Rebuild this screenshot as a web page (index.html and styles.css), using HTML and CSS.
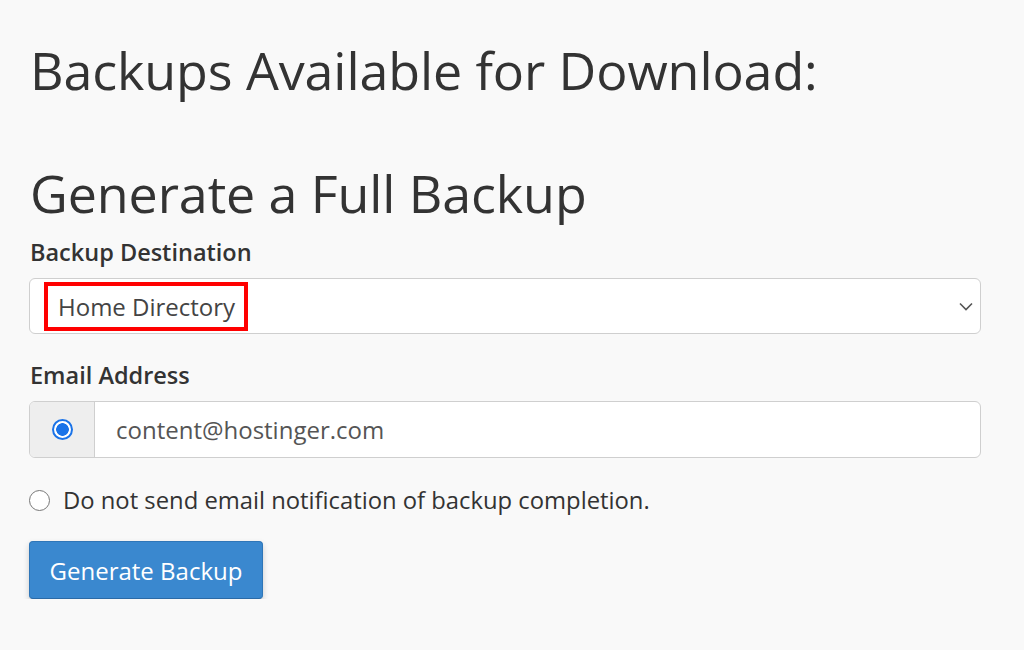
FILE: index.html
```html
<!DOCTYPE html>
<html>
<head>
<meta charset="utf-8">
<link rel="stylesheet" href="styles.css">
</head>
<body>
<div class="page">
  <h1 class="title">Backups Available for Download:</h1>
  <h2 class="title second">Generate a Full Backup</h2>
  <form class="form">
    <label class="label">Backup Destination</label>
    <div class="select">
      <span class="select-value">Home Directory<span class="highlight"></span></span>
      <svg class="chevron" width="14" height="9" viewBox="0 0 14 9"><path d="M1 1.5 L7 7.5 L13 1.5" fill="none" stroke="#555" stroke-width="1.6"/></svg>
    </div>
    <label class="label email-label">Email Address</label>
    <div class="input-group">
      <div class="addon"><span class="radio checked"></span></div>
      <div class="input">content@hostinger.com</div>
    </div>
    <div class="radio-row"><span class="radio"></span><span class="radio-text">Do not send email notification of backup completion.</span></div>
    <button type="button" class="btn">Generate Backup</button>
  </form>
</div>
</body>
</html>
```

FILE: styles.css
```css
html, body {
  margin: 0;
  padding: 0;
  background: #f9f9f9;
}
body {
  font-family: "Open Sans", "Noto Sans", sans-serif;
  color: #333;
}
.page {
  padding: 40px 43px 0 29px;
}
.title {
  font-size: 52px;
  font-weight: 400;
  line-height: 60px;
  margin: 0 0 0 1px;
  letter-spacing: -0.1px;
}
.second {
  margin-top: 63px;
}
.form {
  display: flex;
  flex-direction: column;
  align-items: flex-start;
}
.label {
  font-size: 23.5px;
  font-weight: 600;
  line-height: 30px;
  margin: 14px 0 11px 1px;
}
.email-label {
  margin-top: 26px;
}
.select {
  box-sizing: border-box;
  width: 952px;
  height: 56px;
  background: #fff;
  border: 1px solid #cfcfcf;
  border-radius: 6px;
  display: flex;
  align-items: center;
  justify-content: space-between;
  padding: 0 7px 0 28px;
}
.select-value {
  position: relative;
  font-size: 24px;
  color: #444;
}
.highlight {
  position: absolute;
  left: -14px;
  right: -13px;
  top: -8px;
  bottom: -8px;
  border: 4px solid #f00;
}
.input-group {
  box-sizing: border-box;
  width: 952px;
  height: 57px;
  display: flex;
  border: 1px solid #cfcfcf;
  border-radius: 6px;
  overflow: hidden;
  background: #fff;
}
.addon {
  width: 64px;
  background: #eeeeee;
  border-right: 1px solid #cfcfcf;
  display: flex;
  align-items: center;
  justify-content: center;
}
.input {
  display: flex;
  align-items: center;
  padding-left: 21px;
  font-size: 24px;
  color: #555;
}
.radio {
  box-sizing: border-box;
  width: 21px;
  height: 21px;
  border-radius: 50%;
  border: 1.5px solid #777;
  background: #fff;
  flex-shrink: 0;
}
.radio.checked {
  border: 2px solid #1a73e8;
  background: radial-gradient(circle, #1a73e8 0 6px, #fff 6.6px);
}
.radio-row {
  display: flex;
  align-items: center;
  margin-top: 26px;
  margin-left: 0;
  gap: 13px;
}
.radio-text {
  font-size: 23.8px;
}
.btn {
  margin-top: 25px;
  box-sizing: border-box;
  width: 234px;
  height: 58px;
  background: #3a88cf;
  color: #fff;
  border: 1px solid #2f76b8;
  border-bottom-color: #2b6aa6;
  border-radius: 4px;
  font-family: "Open Sans", "Noto Sans", sans-serif;
  font-size: 24px;
  box-shadow: 0 3px 6px rgba(0,0,0,0.18);
  padding: 0;
}
```
